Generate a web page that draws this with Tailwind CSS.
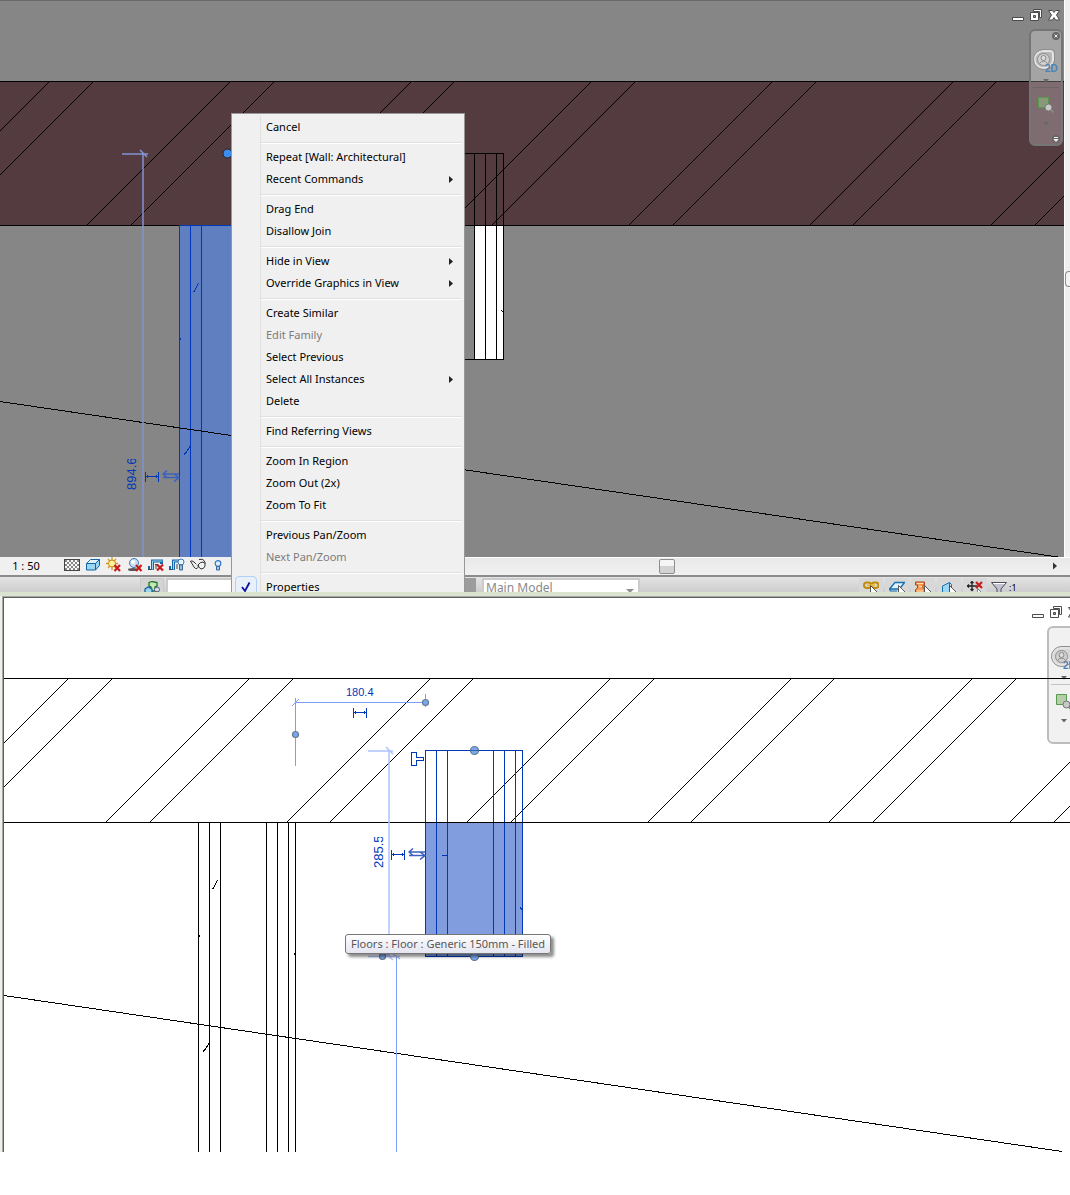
<!DOCTYPE html>
<html lang="en">
<head>
    <meta charset="UTF-8">
    <meta name="viewport" content="width=device-width, initial-scale=1.0">
    <title>Floor Plan</title>
    <script src="https://cdn.jsdelivr.net/npm/@tailwindcss/browser@4"></script>
</head>
<body class="min-h-screen bg-white font-['Noto_Sans','Open_Sans',sans-serif] text-[11px] text-black">
    <!-- Shared icons -->
    <svg class="hidden">
        <symbol id="wheel" viewBox="0 0 26 26">
            <path d="M10 2h7q3 0 3 3v6a9 9 0 0 1-9 8h-1A8.500 8.500 0 0 1 10 2z" fill="#c4c4c4" fill-opacity=".6" stroke="#e4e4e4" stroke-width="2"/>
            <path d="M10 .5h8q3.500 0 3.500 3.500v8A10 10 0 0 1 11 20.500 10 10 0 0 1 10 .5z" fill="none" stroke="#8d8d8d"/>
            <circle cx="10.500" cy="10.500" r="6" fill="#d0d0d0" stroke="#8f8f8f"/>
            <circle cx="10.500" cy="9" r="2.500" fill="#ddd" stroke="#888"/>
            <path d="M6.500 14.500q4-5 8 0" fill="none" stroke="#888"/>
            <text x="12" y="23" font-family="Liberation Sans" font-size="10" font-weight="bold" fill="#4f83b5">2D</text>
        </symbol>
        <symbol id="zoomregion" viewBox="0 0 18 18">
            <path d="M1.500 1.500h10v10h-10z" fill="#8fb57d" fill-opacity=".6" stroke="#57984a"/>
            <path d="M13.500 13.500l3 3" stroke="#888" stroke-width="2"/>
            <circle cx="11.500" cy="11.500" r="3.500" fill="#c9c9c9" stroke="#777"/>
        </symbol>
        <symbol id="caret" viewBox="0 0 6 4"><path d="M0 0h6l-3 3.500z" fill="#68676b"/></symbol>
        <symbol id="minimize" viewBox="0 0 14 14"><path d="M1.500 9.500h11v3h-11z" fill="#fff" stroke="#4c4c4c"/></symbol>
        <symbol id="restore" viewBox="0 0 14 14">
            <path d="M4.500 1.500h8v8h-2v-6h-6z" fill="#fff" stroke="#4c4c4c"/>
            <path d="M1.500 4.500h8v8h-8z" fill="#fff" stroke="#4c4c4c"/>
            <path d="M4.500 7.500h2v2h-2z" fill="#999" stroke="#4c4c4c"/>
        </symbol>
        <symbol id="close" viewBox="0 0 14 14"><path d="M1.500 2.500h4L7 4.500l1.500-2h4L9.500 7l3 5h-4L7 9.500 5.500 12h-4l3-5z" fill="#fff" stroke="#4c4c4c"/></symbol>
        <symbol id="cursor" viewBox="0 0 8 12"><path d="M.5.500v10l2.500-2.500 2 4h2l-2-4h3z" fill="#fff" stroke="#333" stroke-width=".8"/></symbol>
        <symbol id="width" viewBox="0 0 14 10"><path d="M.5 0v10M13.500 0v10M.5 4.500h13M2.500 3v3M11.500 3v3" fill="none" stroke="#0038b8"/></symbol>
        <symbol id="flip" viewBox="0 0 18 12">
            <path d="M5 .5L1 4l4 3.500M1 4h16M12 4l5 3.500-5 4M1 7.500h16" fill="none" stroke="#3a60c0" stroke-width="1.500"/>
        </symbol>
    </svg>

    <!-- Upper view -->
    <section class="relative flex h-[592px] flex-col overflow-hidden">
        <div class="flex flex-1">
            <div class="relative flex-1 overflow-hidden border-t border-[#696969] bg-[#868686]">
                <svg class="absolute inset-0 size-full">
                    <g transform="translate(0,-1)">
                        <path d="M0 81h3000v145H0z" fill="#543b40"/>
                        <path d="M474 226h30v133h-30z" fill="#fff"/>
                        <g fill="none" stroke="#000" shape-rendering="crispEdges">
                            <path d="M0 81.500h3000M0 225.500h3000"/>
                            <path d="M-94.500 225.500l143-143M-50.500 225.500l143-143M86.500 225.500l143-143M130.500 225.500l143-143M267.500 225.500l143-143M310.500 225.500l143-143M447.500 225.500l143-143M491.500 225.500l143-143M628.500 225.500l143-143M672.500 225.500l143-143M809.500 225.500l143-143M852.500 225.500l143-143M990.500 225.500l143-143M1034.500 225.500l143-143"/>
                            <path d="M440 153.500h63.500v206H440M474.500 153v206M485.500 153v206M496.500 153v206M501.500 310l2 3"/>
                        </g>
                        <path d="M179 226h60v340h-60z" fill="#5f7fc1"/>
                        <g fill="none" stroke="#0038b8" shape-rendering="crispEdges">
                            <path d="M240 225.500h-60.500V566M190.500 226v340M201.500 226v340M193.500 292.500l5-9M183.500 455.500l4-5 3-5M180.500 338v2"/>
                        </g>
                        <path d="M0 401.500L1058 557" stroke="#000" shape-rendering="crispEdges"/>
                        <path d="M122 154h26M143 153v410M140 150l7 7" stroke="#8094d0" stroke-width="1.500" fill="none"/>
                        <circle cx="227.500" cy="153.500" r="4.500" fill="#3c8cf0" stroke="#222"/>
                        <use href="#width" x="145" y="472" width="14" height="10"/>
                        <use href="#flip" x="162" y="470" width="18" height="12"/>
                        <clipPath id="dimA"><path d="M120 459h20v34h-20z"/></clipPath>
                        <g clip-path="url(#dimA)">
                            <text transform="translate(136,490) rotate(-90)" font-family="Liberation Sans" font-size="13" fill="#0038b8">894.6</text>
                        </g>
                    </g>
                </svg>
                <div class="absolute top-[7px] right-[3px] flex gap-1">
                    <button aria-label="Minimize"><svg class="size-3.5"><use href="#minimize"/></svg></button>
                    <button aria-label="Restore"><svg class="size-3.5"><use href="#restore"/></svg></button>
                    <button aria-label="Close"><svg class="size-3.5"><use href="#close"/></svg></button>
                </div>
                <nav class="absolute top-7 right-px flex h-[117px] w-[34px] flex-col items-center rounded-md border-2 border-[#757575] bg-white/25">
                    <button class="self-end" aria-label="Close navigation bar">
                        <svg class="size-2.5" viewBox="0 0 10 10"><circle cx="5" cy="5" r="4" fill="#666"/><path d="M3.500 3.500l3 3M6.500 3.500l-3 3" stroke="#eee"/></svg>
                    </button>
                    <button class="mt-2" aria-label="Steering wheel 2D"><svg class="size-[26px]"><use href="#wheel"/></svg></button>
                    <svg class="mt-1 h-1 w-1.5 shrink-0"><use href="#caret"/></svg>
                    <hr class="mt-1 w-[26px] border-[#6e6468]">
                    <button class="mt-2" aria-label="Zoom in region"><svg class="size-[18px]"><use href="#zoomregion"/></svg></button>
                    <svg class="mt-2 h-1 w-1.5 shrink-0"><use href="#caret"/></svg>
                    <button class="mt-auto self-end" aria-label="Customize">
                        <svg class="size-2.5" viewBox="0 0 10 10"><circle cx="5" cy="5" r="4" fill="#666"/><path d="M3 3.500h4M3 5.500h4l-2 2z" stroke="#eee" fill="#eee"/></svg>
                    </button>
                </nav>
            </div>
            <!-- Vertical scrollbar -->
            <div class="w-1.5 border-l border-white bg-[#efefef] pt-[271px]">
                <div class="h-4 rounded-l-sm border border-r-0 border-[#8c8c8c] bg-[#f3f3f3]"></div>
            </div>
        </div>

        <!-- View control bar -->
        <div class="flex h-5 items-center border-b-2 border-b-[#8b8b8b] bg-[#f0f0f0]">
            <button class="w-[52px] text-center">1 : 50</button>
            <div class="ml-3 flex gap-[5px] pb-0.5">
                <button aria-label="Detail level">
                    <svg class="size-4" viewBox="0 0 16 16" shape-rendering="crispEdges">
                        <path d="M.5 2.500h15v11H.5z" fill="#f8f8f8" stroke="#444"/>
                        <path d="M1 4h14M1 8h14M1 12h14" stroke="#888" stroke-width="2" stroke-dasharray="2"/>
                        <path d="M3 6h12M3 10h12" stroke="#888" stroke-width="2" stroke-dasharray="2"/>
                    </svg>
                </button>
                <button aria-label="Visual style">
                    <svg class="size-4" viewBox="0 0 16 16"><path d="M1.500 6.500l4-4h9v6l-4 4.500h-9z" fill="#9bd6f3" stroke="#1463a3"/><path d="M1.500 6.500h9l4-4M10.500 6.500V13" fill="none" stroke="#1463a3"/><path d="M2.500 6l3-3H13l-3 3z" fill="#e0f5fd"/></svg>
                </button>
                <button aria-label="Sun path">
                    <svg class="size-4" viewBox="0 0 16 16"><path d="M6 0v13M0 6.500h12M2 2l8 9M10 2l-8 9" stroke="#d3981a" stroke-width="1.300"/><circle cx="6" cy="6.500" r="3.500" fill="#fff3a2" stroke="#c98a0c"/><path d="M8.500 8l5.500 6M14 8l-5.500 6" stroke="#c71c1c" stroke-width="2.200"/></svg>
                </button>
                <button aria-label="Shadows">
                    <svg class="size-4" viewBox="0 0 16 16"><ellipse cx="6" cy="12.500" rx="5" ry="1.500" fill="#555"/><circle cx="7" cy="6" r="4.500" fill="#c2e1f7" stroke="#4779aa"/><circle cx="6" cy="5" r="2" fill="#fff"/><path d="M9 8l5.500 6M14.500 8L9 14" stroke="#c71c1c" stroke-width="2.200"/></svg>
                </button>
                <button aria-label="Crop view">
                    <svg class="size-4" viewBox="0 0 16 16"><path d="M4.500 13V4H15M0 10.500h2M13.500 3v4" fill="none" stroke="#1668a8" stroke-width="3"/><path d="M4.500 12.500V4h10" fill="none" stroke="#9dd3ef"/><path d="M0 12.500h3M8 7v5M7 7.500h3" stroke="#444"/><path d="M9 7.500l6 6M15 7.500l-6 6" stroke="#c71c1c" stroke-width="2.200"/></svg>
                </button>
                <button aria-label="Show crop region">
                    <svg class="size-4" viewBox="0 0 16 16"><path d="M4.500 13V4H10M0 10.500h2" fill="none" stroke="#1668a8" stroke-width="3"/><path d="M4.500 12.500V4H10" fill="none" stroke="#9dd3ef"/><path d="M0 12.500h3M8 7v5" stroke="#444"/><circle cx="12" cy="5" r="3" fill="#e5f5ff" stroke="#3f78b5"/><path d="M10.500 8h3v5h-3z" fill="#98bfe2" stroke="#3e6590"/></svg>
                </button>
                <button aria-label="Temporary hide/isolate">
                    <svg class="size-4" viewBox="0 0 16 16"><path d="M0 4.500q2-1.500 4 .5l4 4M9 2.500q4-1 5 1l1.500 3" fill="none" stroke="#333"/><path d="M1 5l3 5q1 2 3 1.500 2-1 1-3.500M8 8q2-3 5-3 3 1 2 4-1 3-4 3-2-1-3-4z" fill="#eef4f4" stroke="#333"/></svg>
                </button>
                <button aria-label="Reveal hidden elements">
                    <svg class="size-4" viewBox="0 0 16 16"><circle cx="7" cy="6.500" r="2.800" fill="#dff1ff" stroke="#3176c4" stroke-width="1.200"/><path d="M5.500 9.500h3v3.500h-3z" fill="#a3cbec" stroke="#3a6799"/></svg>
                </button>
            </div>
            <div class="ml-1 flex h-full flex-1 items-center border-t border-white bg-gradient-to-b from-[#e8e8e8] to-[#f1f1f1] pb-px">
                <div class="mr-[395px] ml-auto h-[15px] w-4 rounded-[2px] border border-[#8e8e8e] bg-gradient-to-b from-[#f5f5f5] from-50% to-[#d2d2d2] to-50%"></div>
            </div>
            <svg class="mr-3 -ml-[18px] h-2 w-1.5" viewBox="0 0 6 8"><path d="M1 .5v7L5 4z" fill="#333"/></svg>
        </div>

        <!-- Status bar -->
        <div class="flex h-[15px] items-start overflow-hidden bg-gradient-to-b from-[#e4e4e4] to-[#cdcdcf] pt-px">
            <button class="ml-[140px] flex h-6 w-6 justify-center border border-[#c9c9c9] bg-[#d4d4d4] pt-0.5" aria-label="Worksets">
                <svg class="size-4" viewBox="0 0 16 16"><path d="M5 1.500l3-1 5 1v3.500l-2 1v4H7V6L5 5z" fill="#c3eab4" stroke="#237326" stroke-width="1.300"/><path d="M1 8l3-2 4 2v6H1z" fill="#9ed5ee" stroke="#17659e" stroke-width="1.300"/><circle cx="13" cy="8.500" r="2.500" fill="#ddd" stroke="#505b83"/><path d="M12 11v4h2v-4z" fill="#ddd" stroke="#505b83"/></svg>
            </button>
            <input class="ml-0.5 h-6 w-64 border-2 border-[#cbcbcb] bg-white" aria-label="Active workset">
            <div class="ml-[42px] h-6 w-3 bg-[#9c9c9c]"></div>
            <select class="ml-1.5 h-6 w-[158px] appearance-none border-2 border-[#cbcbcb] bg-white pb-1 pl-0.5 text-[12px] leading-4 text-[#8a8a8a]" aria-label="Design option"><option>Main Model</option></select>
            <svg class="-ml-3.5 mt-2.5 h-1.5 w-2" viewBox="0 0 8 6"><path d="M0 1h8L4 5z" fill="#909090"/></svg>
            <div class="mr-[53px] ml-auto flex gap-0.5">
                <button class="flex h-6 w-6 justify-center bg-[#d8d8d8] pt-[3px]" aria-label="Select links">
                    <svg class="size-4" viewBox="0 0 16 16"><rect x="1" y="1.500" width="7" height="5.500" rx="2.700" fill="none" stroke="#c28c0c" stroke-width="2"/><rect x="8.500" y="1.500" width="7" height="5.500" rx="2.700" fill="none" stroke="#c28c0c" stroke-width="2"/><path d="M4 4.300h8" stroke="#eabd32" stroke-width="2"/><use href="#cursor" x="7" y="4" width="8" height="12"/></svg>
                </button>
                <button class="flex h-6 w-6 justify-center bg-[#d8d8d8] pt-[3px]" aria-label="Select underlay elements">
                    <svg class="size-4" viewBox="0 0 16 16"><path d="M6 1.500h9.500l-5 6.500H.5z" fill="#dff3fc" stroke="#176fae" stroke-width="1.300"/><path d="M1 8v2h7" fill="none" stroke="#176fae"/><use href="#cursor" x="9" y="4" width="8" height="12"/></svg>
                </button>
                <button class="flex h-6 w-6 justify-center bg-[#d8d8d8] pt-[3px]" aria-label="Select pinned elements">
                    <svg class="size-4" viewBox="0 0 16 16"><path d="M.5 1h9v3H8v3l2 1.500v3H.5v-3L2.500 7V4h-2z" fill="#f49b56" stroke="#b54314"/><path d="M2 2.500h6M2 10h6M4 5.500h3" stroke="#ffe1c2"/><use href="#cursor" x="9" y="4" width="8" height="12"/></svg>
                </button>
                <button class="flex h-6 w-6 justify-center bg-[#d8d8d8] pt-[3px]" aria-label="Select by face">
                    <svg class="size-4" viewBox="0 0 16 16"><path d="M1.500 5l7-3.500V14h-7z" fill="#9ed6f3" stroke="#1971ac"/><path d="M8.500 1.500l2 2V9" fill="none" stroke="#1971ac"/><use href="#cursor" x="8" y="4" width="8" height="12"/></svg>
                </button>
                <button class="flex h-6 w-6 justify-center bg-[#d8d8d8] pt-[3px]" aria-label="Drag on selection">
                    <svg class="size-4" viewBox="0 0 16 16"><path d="M5 0v10M0 5h10M3.500 2L5 .5 6.500 2M3.500 8L5 9.500 6.500 8M2 3.500L.5 5 2 6.500" fill="none" stroke="#222" stroke-width="1.300"/><path d="M9 1l6 6M15 1L9 7" stroke="#c71c1c" stroke-width="2.200"/><use href="#cursor" x="10" y="7" width="6" height="9"/></svg>
                </button>
                <button class="flex w-7 items-start pt-1 pl-0.5" aria-label="Filter">
                    <svg class="h-3 w-4 shrink-0" viewBox="0 0 16 12"><path d="M.5.500h15L10 7v4H6V7z" fill="#c2c3ce" stroke="#4b4c5c"/><path d="M2 1.500h12" stroke="#fff"/></svg>
                    <span class="pl-0.5 text-[9px] leading-3">:1</span>
                </button>
            </div>
        </div>

        <!-- Context menu -->
        <div role="menu" class="absolute top-[113px] left-[231px] w-[234px] border border-[#979797] bg-[#f0f0f0] p-0.5 leading-[22px]">
            <div class="relative ml-[26px] border-l border-[#e0e0e0] [&_button]:flex [&_button]:h-[22px] [&_button]:w-full [&_button]:items-center [&_button]:justify-between [&_button]:pr-2 [&_button]:pl-[5px] [&_hr]:mt-1 [&_hr]:mb-0.5 [&_hr]:box-border [&_hr]:h-0.5 [&_hr]:border-b [&_hr]:border-t-[#dfdfdf] [&_hr]:border-b-white">
                <button role="menuitem">Cancel</button>
                <hr>
                <button role="menuitem">Repeat [Wall: Architectural]</button>
                <button role="menuitem">Recent Commands <svg class="h-[7px] w-1.5" viewBox="0 0 6 7"><path d="M1 0v7l4-3.500z" fill="#222"/></svg></button>
                <hr>
                <button role="menuitem">Drag End</button>
                <button role="menuitem">Disallow Join</button>
                <hr>
                <button role="menuitem">Hide in View <svg class="h-[7px] w-1.5" viewBox="0 0 6 7"><path d="M1 0v7l4-3.500z" fill="#222"/></svg></button>
                <button role="menuitem">Override Graphics in View <svg class="h-[7px] w-1.5" viewBox="0 0 6 7"><path d="M1 0v7l4-3.500z" fill="#222"/></svg></button>
                <hr>
                <button role="menuitem">Create Similar</button>
                <button role="menuitem" disabled class="text-[#7b7b7b]">Edit Family</button>
                <button role="menuitem">Select Previous</button>
                <button role="menuitem">Select All Instances <svg class="h-[7px] w-1.5" viewBox="0 0 6 7"><path d="M1 0v7l4-3.500z" fill="#222"/></svg></button>
                <button role="menuitem">Delete</button>
                <hr>
                <button role="menuitem">Find Referring Views</button>
                <hr>
                <button role="menuitem">Zoom In Region</button>
                <button role="menuitem">Zoom Out (2x)</button>
                <button role="menuitem">Zoom To Fit</button>
                <hr>
                <button role="menuitem">Previous Pan/Zoom</button>
                <button role="menuitem" disabled class="text-[#7b7b7b]">Next Pan/Zoom</button>
                <hr>
                <button role="menuitemcheckbox" aria-checked="true">Properties</button>
                <span class="absolute bottom-0 -left-[26px] flex size-[22px] items-center justify-center rounded-sm border border-[#afd0f7] bg-[#e8f0f9]">
                    <svg class="h-2.5 w-2.5" viewBox="0 0 10 10"><path d="M1 5l3 4 4.500-8.500" fill="none" stroke="#0c12a1" stroke-width="1.800"/></svg>
                </span>
            </div>
        </div>
    </section>

    <!-- Lower view -->
    <section class="border-t-4 border-[#d9e3d0]">
        <div class="border-l-2 border-[#eff0ec]">
            <div class="border-t border-l border-[#a7a9a5]">
                <div class="relative h-[555px] overflow-hidden border-t border-l border-[#5d5d5d] bg-white">
                    <svg class="absolute inset-0 size-full">
                        <g transform="translate(-4,-598)">
                            <path d="M426 823h97v133h-97z" fill="#819ddd"/>
                            <g fill="none" stroke="#000" shape-rendering="crispEdges">
                                <path d="M-75.500 822.500l143-143M-31.500 822.500l143-143M105.500 822.500l143-143M149.500 822.500l143-143M286.500 822.500l143-143M329.500 822.500l143-143M466.500 822.500l143-143M510.500 822.500l143-143M647.500 822.500l143-143M690.500 822.500l143-143M828.500 822.500l143-143M872.500 822.500l143-143M1009.500 822.500l143-143M1053.500 822.500l143-143"/>
                                <path d="M198.500 823v329M209.500 823v329M220.500 823v329M266.500 823v329M277.500 823v329M288.500 823v329M295.500 823v329M212.500 889.500l5-9M202.500 1052.500l4-5 3-5M199.500 935v2M294.500 953v2"/>
                                <path d="M4 995.500L1062 1151.500"/>
                            </g>
                            <g fill="none" stroke="#0038b8" shape-rendering="crispEdges">
                                <path d="M425.500 750.500h97v206h-97zM436.500 750v206M447.500 750v206M493.500 750v206M504.500 750v206M515.500 750v206M442 855.500h6M520 907l2 3"/>
                                <path d="M411.500 752.500h5v5h7v3h-7v5h-5z"/>
                            </g>
                            <path d="M4 678.500h3000M4 822.500h3000" stroke="#000" shape-rendering="crispEdges"/>
                            <g fill="none" stroke="#7c9df5">
                                <path d="M295.500 698v68M295 702.500h130M425.500 694v13M292 706l7-7"/>
                                <path d="M396.500 956v196M392 953l8 6"/>
                            </g>
                            <path d="M368 751h25M389 750v206M386 747l7 7M368 956.500h32M385 953l8 7" fill="none" stroke="#b0c3fb" stroke-width="1.500"/>
                            <g fill="#78a8ee" stroke="#687a91" stroke-width="1.200">
                                <circle cx="295.500" cy="734.500" r="3"/>
                                <circle cx="425.500" cy="702.500" r="3"/>
                                <circle cx="382.500" cy="956.500" r="3"/>
                                <circle cx="474.500" cy="750.500" r="4"/>
                                <circle cx="474.500" cy="956.500" r="4"/>
                            </g>
                            <path d="M470 750.500h9" stroke="#345fa5"/>
                            <use href="#width" x="353" y="708" width="14" height="10"/>
                            <use href="#width" x="391" y="850" width="14" height="10"/>
                            <use href="#flip" x="408" y="848" width="18" height="12"/>
                            <g font-family="Liberation Sans" fill="#0038b8">
                                <text x="346" y="696" font-size="11">180.4</text>
                                <clipPath id="dimB"><path d="M368 837h20v34h-20z"/></clipPath>
                                <g clip-path="url(#dimB)"><text transform="translate(383,868) rotate(-90)" font-size="13">285.5</text></g>
                            </g>
                        </g>
                    </svg>
                    <div class="absolute top-[7px] -right-[11px] flex gap-1">
                        <button aria-label="Minimize"><svg class="size-3.5"><use href="#minimize"/></svg></button>
                        <button aria-label="Restore"><svg class="size-3.5"><use href="#restore"/></svg></button>
                        <button aria-label="Close"><svg class="size-3.5"><use href="#close"/></svg></button>
                    </div>
                    <nav class="absolute top-7 -right-[11px] flex h-[118px] w-[34px] flex-col items-center rounded-md border-2 border-[#bdbdbd] bg-[#eee]/80">
                        <button class="mt-[18px]" aria-label="Steering wheel 2D"><svg class="size-[26px]"><use href="#wheel"/></svg></button>
                        <svg class="mt-1 h-1 w-1.5 shrink-0"><use href="#caret"/></svg>
                        <hr class="mt-1 w-[26px] border-[#c4c4c4]">
                        <button class="mt-2" aria-label="Zoom in region"><svg class="size-[18px]"><use href="#zoomregion"/></svg></button>
                        <svg class="mt-2 h-1 w-1.5 shrink-0"><use href="#caret"/></svg>
                    </nav>
                    <svg class="pointer-events-none absolute inset-x-0 top-20 h-px w-full"><path d="M0 .5h3000" stroke="#000"/></svg>
                    <div role="tooltip" class="absolute top-[336px] left-[341px] rounded-[3px] border border-[#767676] bg-gradient-to-b from-white to-[#e4e5f0] px-[5px] leading-[18px] whitespace-nowrap text-[#575757] shadow-[3px_3px_3px_rgba(0,0,0,0.45)]">Floors : Floor : Generic 150mm - Filled</div>
                </div>
            </div>
        </div>
    </section>
</body>
</html>
